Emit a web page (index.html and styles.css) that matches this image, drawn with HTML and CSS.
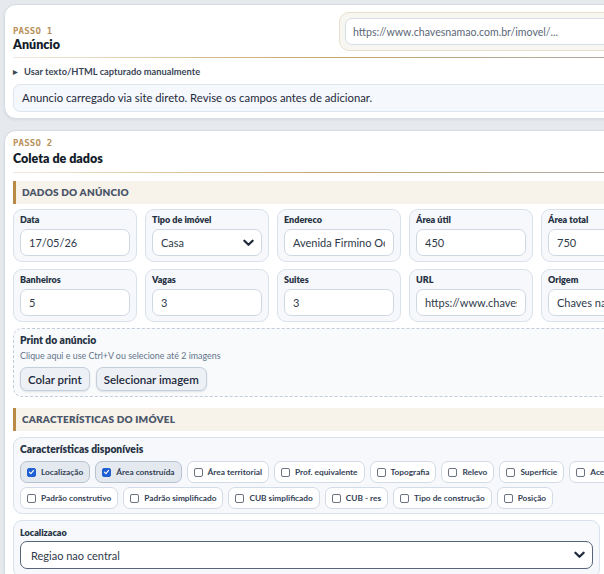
FILE: index.html
```html
<!DOCTYPE html>
<html lang="pt-BR">
<head>
<meta charset="utf-8">
<title>Coleta</title>
<link rel="stylesheet" href="styles.css">
</head>
<body>
<div class="page">
  <section class="card card1">
    <div class="card-head">
      <div class="head-text">
        <div class="step">PASSO 1</div>
        <div class="title">Anúncio</div>
      </div>
      <div class="url-wrap">
        <input class="url-input" type="text" placeholder="https://www.chavesnamao.com.br/imovel/...">
      </div>
    </div>
    <div class="rule"></div>
    <div class="disclosure"><span class="tri">&#9654;</span>Usar texto/HTML capturado manualmente</div>
    <div class="notice">Anuncio carregado via site direto. Revise os campos antes de adicionar.</div>
  </section>

  <section class="card card2">
    <div class="head-text">
      <div class="step">PASSO 2</div>
      <div class="title">Coleta de dados</div>
    </div>
    <div class="rule"></div>

    <div class="section-head">DADOS DO ANÚNCIO</div>
    <div class="fields">
      <div class="field"><label>Data</label><input class="inp" value="17/05/26"></div>
      <div class="field"><label>Tipo de imóvel</label>
        <div class="sel-wrap">
          <select class="inp sel"><option>Casa</option></select>
          <svg class="chev" viewBox="0 0 12 8" width="11" height="8"><path d="M1.5 1.5 L6 6 L10.5 1.5" fill="none" stroke="#1e293b" stroke-width="2.4" stroke-linecap="round" stroke-linejoin="round"/></svg>
        </div>
      </div>
      <div class="field"><label>Endereco</label><input class="inp" value="Avenida Firmino Octavio"></div>
      <div class="field"><label>Área útil</label><input class="inp" value="450"></div>
      <div class="field"><label>Área total</label><input class="inp" value="750"></div>
      <div class="field"><label>Banheiros</label><input class="inp" value="5"></div>
      <div class="field"><label>Vagas</label><input class="inp" value="3"></div>
      <div class="field"><label>Suites</label><input class="inp" value="3"></div>
      <div class="field"><label>URL</label><input class="inp" value="https://www.chavesnamao.com.br"></div>
      <div class="field"><label>Origem</label><input class="inp" value="Chaves na Mão"></div>
    </div>

    <div class="print-box">
      <div class="box-title">Print do anúncio</div>
      <div class="hint">Clique aqui e use Ctrl+V ou selecione até 2 imagens</div>
      <div class="btns">
        <button class="btn">Colar print</button>
        <button class="btn">Selecionar imagem</button>
      </div>
    </div>

    <div class="section-head sec2">CARACTERÍSTICAS DO IMÓVEL</div>
    <div class="chars-box">
      <div class="box-title">Características disponíveis</div>
      <div class="chips">
        <span class="chip on"><span class="cb on"><svg viewBox="0 0 10 10" width="8" height="8"><path d="M2 5.2 L4.2 7.3 L8 2.8" fill="none" stroke="#fff" stroke-width="1.6" stroke-linecap="round" stroke-linejoin="round"/></svg></span>Localização</span>
        <span class="chip on"><span class="cb on"><svg viewBox="0 0 10 10" width="8" height="8"><path d="M2 5.2 L4.2 7.3 L8 2.8" fill="none" stroke="#fff" stroke-width="1.6" stroke-linecap="round" stroke-linejoin="round"/></svg></span>Área construída</span>
        <span class="chip"><span class="cb"></span>Área territorial</span>
        <span class="chip"><span class="cb"></span>Prof. equivalente</span>
        <span class="chip"><span class="cb"></span>Topografia</span>
        <span class="chip"><span class="cb"></span>Relevo</span>
        <span class="chip"><span class="cb"></span>Superfície</span>
        <span class="chip"><span class="cb"></span>Acessibilidade</span>
      </div>
      <div class="chips">
        <span class="chip"><span class="cb"></span>Padrão construtivo</span>
        <span class="chip"><span class="cb"></span>Padrão simplificado</span>
        <span class="chip"><span class="cb"></span>CUB simplificado</span>
        <span class="chip"><span class="cb"></span>CUB - res</span>
        <span class="chip"><span class="cb"></span>Tipo de construção</span>
        <span class="chip"><span class="cb"></span>Posição</span>
      </div>
    </div>

    <div class="loc-box">
      <label class="box-label">Localizacao</label>
      <div class="sel-wrap">
        <select class="inp sel loc-sel"><option>Regiao nao central</option></select>
        <svg class="chev" viewBox="0 0 12 8" width="11" height="8"><path d="M1.5 1.5 L6 6 L10.5 1.5" fill="none" stroke="#1e293b" stroke-width="2.4" stroke-linecap="round" stroke-linejoin="round"/></svg>
      </div>
    </div>
  </section>
</div>
</body>
</html>
```

FILE: styles.css
```css
* { box-sizing: border-box; }
html, body { margin: 0; padding: 0; }
body {
  background: #e6eaee;
  font-family: Lato, "Open Sans", sans-serif;
  color: #1e293b;
}
.page {
  width: 760px;
  padding: 4px 0 0 4px;
}
.card {
  background: #fff;
  border: 1px solid #d6dde5;
  border-radius: 12px;
  padding: 7px 8px 6px 8px;
  box-shadow: 0 1px 3px rgba(30, 41, 59, 0.08);
}
.card2 {
  margin-top: 11px;
  padding-top: 6px;
}
.card-head {
  display: flex;
  align-items: flex-end;
  justify-content: space-between;
}
.step {
  font-family: "DejaVu Sans Mono", monospace;
  font-size: 9px;
  font-weight: bold;
  color: #b8915a;
  line-height: 12px;
  letter-spacing: 0.2px;
}
.title {
  font-size: 12.5px;
  font-weight: 800;
  color: #131c2b;
  line-height: 16px;
}
.card2 .title { margin-top: 2px; }
.url-wrap {
  width: 412px;
  background: #f8f6f1;
  border: 1px solid #e9dfcf;
  border-radius: 10px;
  padding: 5px 0 5px 5px;
  margin-bottom: 2px;
}
.url-input {
  display: block;
  width: 100%;
  height: 27px;
  border: 1px solid #d5dde6;
  border-radius: 7px;
  background: #fff;
  padding: 0 7px;
  font-family: inherit;
  font-size: 10.6px;
  color: #334155;
}
.url-input::placeholder { color: #5b6778; }
.rule {
  height: 1px;
  margin-top: 5px;
  background: linear-gradient(90deg, #f3ebde 0%, #d8be92 25%, #c4a46c 45%, #b6aa98 70%, #aeaaa6 100%);
}
.card1 .rule { margin-top: 4px; }
.disclosure {
  margin-top: 7px;
  font-size: 9.3px;
  font-weight: 700;
  color: #3b4656;
  line-height: 14px;
}
.tri {
  display: inline-block;
  font-size: 6px;
  color: #3b4656;
  width: 11px;
  vertical-align: 1px;
}
.notice {
  margin-top: 5px;
  background: #f5f8fc;
  border: 1px solid #dde5ef;
  border-radius: 7px;
  padding: 0 8px;
  height: 28px;
  line-height: 26px;
  font-size: 11.3px;
  color: #1e293b;
}
.section-head {
  margin-top: 8px;
  height: 23px;
  line-height: 23px;
  background: #f7f2ea;
  border-left: 3px solid #b98a45;
  padding-left: 6px;
  font-size: 10px;
  font-weight: 800;
  color: #4a5568;
  letter-spacing: 0.2px;
}
.sec2 { margin-top: 11px; }
.fields {
  margin-top: 5px;
  display: grid;
  grid-template-columns: repeat(5, 124px);
  column-gap: 8px;
  row-gap: 7px;
}
.field {
  background: #f6f8fb;
  border: 1px solid #d9e2ec;
  border-radius: 9px;
  padding: 4px 6px 5px 6px;
  height: 53px;
}
.field label, .box-label {
  display: block;
  font-size: 9px;
  font-weight: 800;
  color: #273244;
  line-height: 12px;
  margin-bottom: 3px;
}
.inp {
  display: block;
  width: 100%;
  height: 27px;
  border: 1px solid #cfd8e3;
  border-radius: 7px;
  background: #fff;
  padding: 0 8px;
  font-family: inherit;
  font-size: 11px;
  color: #2f3a4a;
  outline: none;
}
.sel-wrap { position: relative; }
.sel {
  appearance: none;
  -webkit-appearance: none;
}
.chev {
  position: absolute;
  right: 8px;
  top: 10px;
  pointer-events: none;
}
.print-box {
  margin-top: 6px;
  border: 1px dashed #c3cdd9;
  border-radius: 9px;
  background: #f8fafc;
  padding: 5px 6px 5px 6px;
}
.box-title {
  font-size: 10.3px;
  font-weight: 800;
  color: #273244;
  line-height: 13px;
}
.hint {
  font-size: 8.9px;
  color: #64748b;
  line-height: 12px;
  margin-top: 3px;
}
.btns {
  display: flex;
  gap: 6px;
  margin-top: 5px;
}
.btn {
  height: 24px;
  padding: 0 7px;
  border: 1px solid #c5cfdb;
  border-radius: 7px;
  background: #edf1f6;
  font-family: inherit;
  font-size: 11.5px;
  font-weight: 600;
  color: #1e293b;
  box-shadow: 0 1px 2px rgba(30, 41, 59, 0.12);
}
.chars-box {
  margin-top: 6px;
  background: #f6f8fb;
  border: 1px solid #d9e2ec;
  border-radius: 9px;
  padding: 5px 6px 4px 6px;
}
.chips {
  display: flex;
  gap: 5px;
  margin-top: 5px;
  white-space: nowrap;
}
.chips + .chips { margin-top: 4px; }
.chip {
  display: inline-flex;
  align-items: center;
  height: 22px;
  padding: 0 6px;
  border: 1px solid #d2dbe6;
  border-radius: 7px;
  background: #fff;
  font-size: 8.3px;
  font-weight: 700;
  color: #334155;
}
.chip.on {
  background: #e4e9f0;
  border-color: #b6c2d0;
}
.cb {
  width: 9px;
  height: 9px;
  border: 1px solid #6b7280;
  border-radius: 2px;
  margin-right: 5px;
  display: inline-flex;
  align-items: center;
  justify-content: center;
  background: #fff;
}
.cb.on {
  background: #1f5fd1;
  border-color: #1f5fd1;
}
.loc-box {
  margin-top: 6px;
  width: 587px;
  background: #f6f8fb;
  border: 1px solid #d9e2ec;
  border-radius: 9px;
  padding: 6px 6px 8px 6px;
}
.loc-box .box-label { margin-bottom: 2px; }
.loc-sel {
  height: 28px;
  border: 1px solid #566579;
  padding-left: 10px;
}
```
